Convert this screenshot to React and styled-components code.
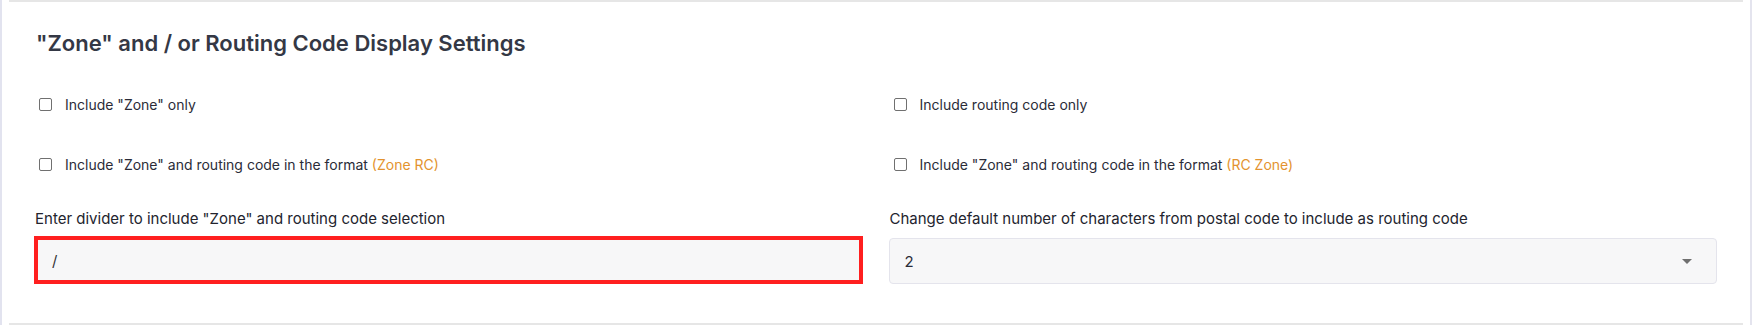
import React from 'react';
import styled, { createGlobalStyle } from 'styled-components';

const GlobalStyle = createGlobalStyle`
  body {
    margin: 0;
    background: #ffffff;
    font-family: Inter, "Noto Sans", sans-serif;
  }
`;

const options = [
  { id: 'zone', label: 'Include "Zone" only' },
  { id: 'rc', label: 'Include routing code only' },
  { id: 'zone-rc', label: 'Include "Zone" and routing code in the format', hint: '(Zone RC)' },
  { id: 'rc-zone', label: 'Include "Zone" and routing code in the format', hint: '(RC Zone)' },
];

const App = () => {
  return (
    <>
      <GlobalStyle />
      <FrameStyled>
        <CardStyled>
          <TitleStyled>"Zone" and / or Routing Code Display Settings</TitleStyled>
          <OptionsGrid>
            {options.map(opt => (
              <CheckRow key={opt.id}>
                <CheckBox type='checkbox' />
                <CheckLabel>
                  {opt.label}
                  {opt.hint && <HintStyled> {opt.hint}</HintStyled>}
                </CheckLabel>
              </CheckRow>
            ))}
          </OptionsGrid>
          <FieldsGrid>
            <FieldStyled>
              <FieldLabel>Enter divider to include "Zone" and routing code selection</FieldLabel>
              <TextInput defaultValue='/' error />
            </FieldStyled>
            <FieldStyled>
              <FieldLabel>
                Change default number of characters from postal code to include as routing code
              </FieldLabel>
              <SelectBox>
                <span>2</span>
                <Caret />
              </SelectBox>
            </FieldStyled>
          </FieldsGrid>
        </CardStyled>
      </FrameStyled>
    </>
  );
};

const FrameStyled = styled.div`
  height: 325px;
  box-sizing: border-box;
  border-left: 2px solid #e2e3ef;
  border-right: 2px solid #e4e4ee;
  padding: 0 7px;
`;

const CardStyled = styled.section`
  height: 100%;
  box-sizing: border-box;
  border-top: 2px solid #e6e6e6;
  border-bottom: 2px solid #e6e6e6;
  padding: 29px 26px 0 25px;
`;

const TitleStyled = styled.h2`
  margin: 0;
  font-size: 22px;
  line-height: 24px;
  font-weight: 600;
  color: #343845;
  padding-left: 2px;
`;

const OptionsGrid = styled.div`
  display: grid;
  grid-template-columns: 1fr 1fr;
  column-gap: 26px;
  row-gap: 40px;
  margin-top: 39px;
`;

const CheckRow = styled.label`
  display: flex;
  align-items: center;
  gap: 13px;
  height: 20px;
  padding-left: 5px;
`;

const CheckBox = styled.input`
  appearance: none;
  margin: 0;
  width: 13px;
  height: 13px;
  border: 1.5px solid #707070;
  border-radius: 2px;
  box-sizing: border-box;
  background: #fff;
`;

const CheckLabel = styled.span`
  font-size: 14px;
  color: #2b2c38;
`;

const HintStyled = styled.span`
  color: #e3932f;
`;

const FieldsGrid = styled.div`
  display: grid;
  grid-template-columns: 1fr 1fr;
  column-gap: 26px;
  margin-top: 35px;
`;

const FieldStyled = styled.div`
  display: flex;
  flex-direction: column;
`;

const FieldLabel = styled.div`
  font-size: 15px;
  line-height: 20px;
  color: #23242e;
  margin-bottom: 7px;
  padding-left: 1px;
`;

const TextInput = styled.input`
  height: 48px;
  box-sizing: border-box;
  border: ${({ error }) => (error ? '4px solid #ff1f1f' : '1px solid #e4e4ec')};
  background: #f7f7f8;
  padding: 0 14px;
  font-family: inherit;
  font-size: 15px;
  color: #333;
  outline: none;
`;

const SelectBox = styled.div`
  height: 46px;
  margin-top: 2px;
  box-sizing: border-box;
  border: 1px solid #e4e4ec;
  border-radius: 4px;
  background: #f7f7f8;
  display: flex;
  align-items: center;
  justify-content: space-between;
  padding: 0 24px 0 15px;
  font-size: 15px;
  color: #2b2c38;
`;

const Caret = styled.span`
  width: 0;
  height: 0;
  border-left: 5px solid transparent;
  border-right: 5px solid transparent;
  border-top: 5px solid #6f6f6f;
`;

export default App;
